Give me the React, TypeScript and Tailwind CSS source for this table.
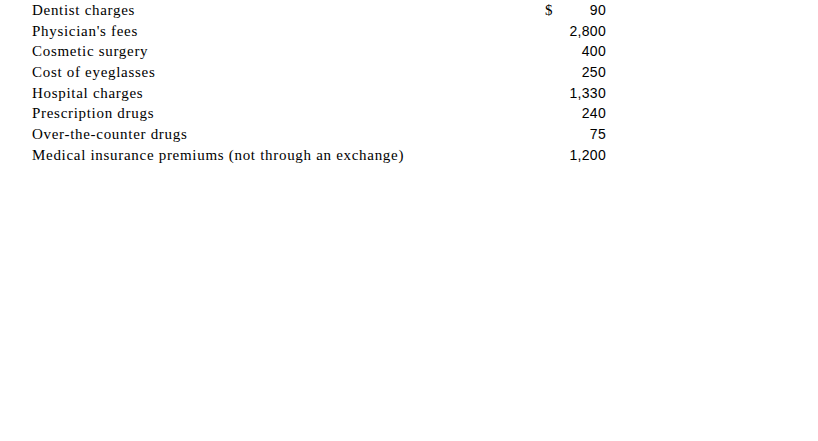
const rows: { label: string; amount: string; dollar?: boolean }[] = [
  { label: 'Dentist charges', amount: '90', dollar: true },
  { label: "Physician's fees", amount: '2,800' },
  { label: 'Cosmetic surgery', amount: '400' },
  { label: 'Cost of eyeglasses', amount: '250' },
  { label: 'Hospital charges', amount: '1,330' },
  { label: 'Prescription drugs', amount: '240' },
  { label: 'Over-the-counter drugs', amount: '75' },
  { label: 'Medical insurance premiums (not through an exchange)', amount: '1,200' },
]

export default function App() {
  return (
    <div className="h-[441px] w-[818px] overflow-hidden bg-white text-black">
      <div className="flex flex-col pl-[32px]">
        {rows.map((row) => (
          <div key={row.label} className="flex h-[20.7px] items-center leading-[20.7px]">
            <span className="w-[513px] whitespace-nowrap font-['Liberation_Serif',serif] text-[15px] tracking-[0.7px]">
              {row.label}
            </span>
            <span className="w-[16px] font-['Liberation_Serif',serif] text-[15px]">
              {row.dollar ? '$' : ''}
            </span>
            <span className="w-[45px] text-right font-['Liberation_Sans',sans-serif] text-[14px] tracking-[0.3px]">
              {row.amount}
            </span>
          </div>
        ))}
      </div>
    </div>
  )
}
